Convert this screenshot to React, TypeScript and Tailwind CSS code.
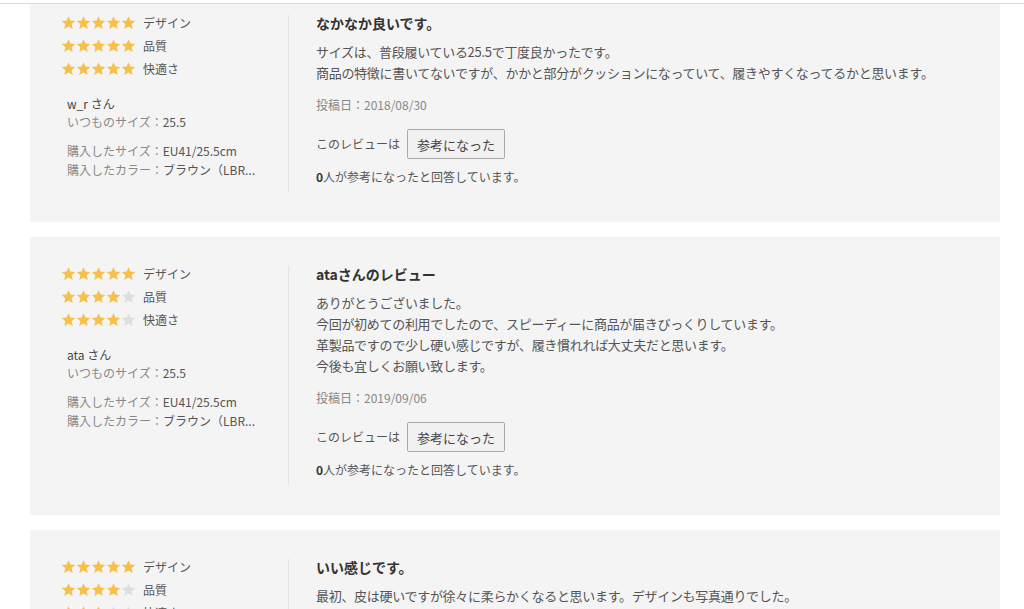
import React from "react";

type Review = {
  ratings: number[];
  user: string;
  usual: string;
  size: string;
  color: string;
  title: string;
  body: string[];
  date: string;
};

const reviews: Review[] = [
  {
    ratings: [5, 5, 5],
    user: "w_r さん",
    usual: "25.5",
    size: "EU41/25.5cm",
    color: "ブラウン（LBR...",
    title: "なかなか良いです。",
    body: [
      "サイズは、普段履いている25.5で丁度良かったです。",
      "商品の特徴に書いてないですが、かかと部分がクッションになっていて、履きやすくなってるかと思います。",
    ],
    date: "2018/08/30",
  },
  {
    ratings: [5, 4, 4],
    user: "ata さん",
    usual: "25.5",
    size: "EU41/25.5cm",
    color: "ブラウン（LBR...",
    title: "ataさんのレビュー",
    body: [
      "ありがとうございました。",
      "今回が初めての利用でしたので、スピーディーに商品が届きびっくりしています。",
      "革製品ですので少し硬い感じですが、履き慣れれば大丈夫だと思います。",
      "今後も宜しくお願い致します。",
    ],
    date: "2019/09/06",
  },
  {
    ratings: [5, 4, 3],
    user: "mk さん",
    usual: "25.5",
    size: "EU41/25.5cm",
    color: "ブラウン（LBR...",
    title: "いい感じです。",
    body: ["最初、皮は硬いですが徐々に柔らかくなると思います。デザインも写真通りでした。"],
    date: "2019/10/12",
  },
];

const labels = ["デザイン", "品質", "快適さ"];

function Star({ on }: { on: boolean }) {
  return (
    <svg width="15" height="15" viewBox="0 0 24 24" className="block">
      <path
        d="M12 1.8l3.1 7.1 7.7.7-5.8 5.1 1.8 7.6L12 18.3l-6.8 4 1.8-7.6-5.8-5.1 7.7-.7z"
        fill={on ? "#f7c04b" : "#dedede"}
      />
    </svg>
  );
}

function Card({ r, first }: { r: Review; first?: boolean }) {
  return (
    <div
      className={
        "bg-[#f4f4f4] w-[970px] pl-[31px] pt-[25px] pb-[36px] flex " +
        (first ? "-mt-[18px]" : "")
      }
    >
      <div className="w-[227px] shrink-0">
        {r.ratings.map((n, i) => (
          <div key={i} className="flex items-center h-[23px]">
            <div className="flex">
              {[0, 1, 2, 3, 4].map((k) => (
                <Star key={k} on={k < n} />
              ))}
            </div>
            <span className="ml-[7px] text-[12px] leading-[23px] text-[#555]">{labels[i]}</span>
          </div>
        ))}
        <div className="ml-[6px] mt-[15px] text-[12px] leading-[18px] text-[#888]">
          <div className="text-[#444]">{r.user}</div>
          <div>
            いつものサイズ：<span className="text-[#555]">{r.usual}</span>
          </div>
          <div className="mt-[10px] leading-[19px]">
            購入したサイズ：<span className="text-[#555]">{r.size}</span>
          </div>
          <div className="leading-[19px] whitespace-nowrap">
            購入したカラー：<span className="text-[#555]">{r.color}</span>
          </div>
        </div>
      </div>
      <div className="w-px bg-[#e3e3e3] mt-[4px] -mb-[6px] shrink-0" />
      <div className="pl-[27px] flex-1">
        <div className="text-[14px] leading-[24px] font-bold text-[#333]">{r.title}</div>
        <div className="mt-[6px] text-[13px] leading-[21px] text-[#555] tracking-[-0.3px]">
          {r.body.map((l, i) => (
            <div key={i}>{l}</div>
          ))}
        </div>
        <div className="mt-[13px] text-[12px] leading-[18px] text-[#888]">投稿日：{r.date}</div>
        <div className="mt-[15px] flex items-center h-[30px]">
          <span className="text-[12px] text-[#555]">このレビューは</span>
          <button className="ml-[7px] h-[30px] px-[9px] border border-[#a9a9a9] rounded-[2px] bg-[#f1f1f1] text-[13px] text-[#444] leading-none">
            参考になった
          </button>
        </div>
        <div className="mt-[9px] text-[12px] leading-[18px] text-[#555]">
          <span className="font-bold text-[#333]">0</span>人が参考になったと回答しています。
        </div>
      </div>
    </div>
  );
}

export default function App() {
  return (
    <div
      className="w-[1024px] h-[609px] overflow-hidden bg-white"
      style={{ fontFamily: '"Noto Sans CJK JP", "Noto Sans", sans-serif' }}
    >
      <div className="h-[3px]" />
      <div className="h-px bg-[#dcdcdc]" />
      <div className="h-[605px] overflow-hidden">
        <div className="pl-[30px] flex flex-col gap-[15px]">
          {reviews.map((r, i) => (
            <Card key={i} r={r} first={i === 0} />
          ))}
        </div>
      </div>
    </div>
  );
}
